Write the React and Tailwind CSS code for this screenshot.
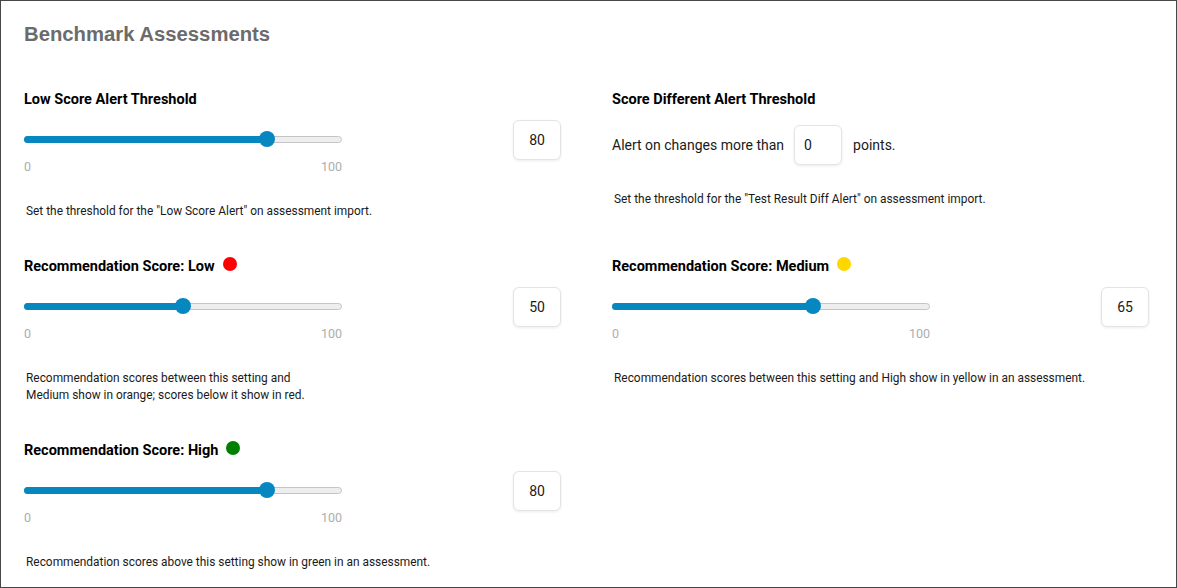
import React from "react";

const font = { fontFamily: "Roboto, 'Noto Sans', sans-serif" };

function Slider({ value }) {
  const center = 19 + value * 2.8;
  return (
    <div className="w-[318px]">
      <div className="relative h-[38px] flex items-center">
        <div className="relative w-full h-[7px] rounded-full bg-[#eeeeee] border border-[#c4c4c4]" />
        <div
          className="absolute left-0 top-[15.5px] h-[7px] rounded-full bg-[#0787c0]"
          style={{ width: center }}
        />
        <div
          className="absolute top-[11px] w-[16px] h-[16px] rounded-full bg-[#0787c0]"
          style={{ left: center - 8 }}
        />
      </div>
      <div className="mt-[1px] flex justify-between text-[12.5px] leading-[16px] text-[#adadad]">
        <span>0</span>
        <span>100</span>
      </div>
    </div>
  );
}

function NumBox({ value }) {
  return (
    <div className="w-[48px] h-[40px] rounded-[6px] border border-[#e4e4e4] bg-white shadow-[0_1px_3px_rgba(0,0,0,0.08)] flex items-center justify-center text-[14px] text-[#1a1a1a]">
      {value}
    </div>
  );
}

function Label({ children, dot }) {
  return (
    <div className="h-[20px] flex items-center text-[14.5px] font-bold text-black">
      <span>{children}</span>
      {dot && (
        <span
          className={"ml-[8px] mb-[6px] w-[14px] h-[14px] rounded-full inline-block " + dot}
        />
      )}
    </div>
  );
}

function SliderSection({ label, dot, value, desc }) {
  return (
    <div>
      <Label dot={dot}>{label}</Label>
      <div className="mt-[10px] flex justify-between items-start">
        <Slider value={value} />
        <NumBox value={value} />
      </div>
      <div className="mt-[28px] pl-[2px] text-[11.9px] leading-[17px] text-[#1a1a1a]">{desc}</div>
    </div>
  );
}

export default function App() {
  return (
    <div
      className="w-[1177px] h-[588px] border border-[#474747] bg-white overflow-hidden"
      style={font}
    >
      <div className="pl-[23px] pt-[21px]">
        <h1
          className="text-[20.3px] leading-[24px] font-bold text-[#6b6b6b]"
          style={{ fontFamily: "'Liberation Sans', Arial, sans-serif" }}
        >
          Benchmark Assessments
        </h1>
        <div className="mt-[44px] grid grid-cols-[537px_537px] gap-x-[51px] gap-y-[37px] items-start">
          <SliderSection
            label="Low Score Alert Threshold"
            value={80}
            desc={'Set the threshold for the "Low Score Alert" on assessment import.'}
          />
          <div>
            <Label>Score Different Alert Threshold</Label>
            <div className="mt-[15px] flex items-center text-[14px] text-[#1a1a1a]">
              <span>Alert on changes more than</span>
              <div className="ml-[10px] w-[48px] h-[40px] rounded-[6px] border border-[#e4e4e4] bg-white shadow-[0_1px_3px_rgba(0,0,0,0.08)] flex items-center pl-[9px] text-[14px] text-[#1a1a1a]">
                0
              </div>
              <span className="ml-[11px]">points.</span>
            </div>
            <div className="mt-[26px] pl-[2px] text-[11.9px] leading-[17px] text-[#1a1a1a]">
              Set the threshold for the "Test Result Diff Alert" on assessment import.
            </div>
          </div>
          <SliderSection
            label="Recommendation Score: Low"
            dot="bg-[#ff0000]"
            value={50}
            desc={
              <>
                Recommendation scores between this setting and
                <br />
                Medium show in orange; scores below it show in red.
              </>
            }
          />
          <SliderSection
            label="Recommendation Score: Medium"
            dot="bg-[#ffd700]"
            value={65}
            desc="Recommendation scores between this setting and High show in yellow in an assessment."
          />
          <SliderSection
            label="Recommendation Score: High"
            dot="bg-[#008000]"
            value={80}
            desc="Recommendation scores above this setting show in green in an assessment."
          />
        </div>
      </div>
    </div>
  );
}
